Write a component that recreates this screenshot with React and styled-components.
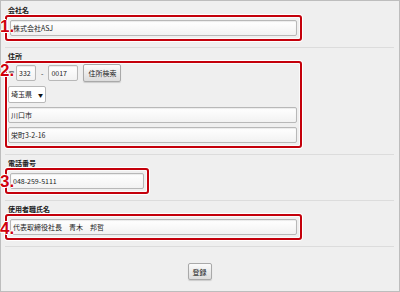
import React from 'react';
import styled, { createGlobalStyle } from 'styled-components';

const GlobalStyle = createGlobalStyle`
  html, body {
    margin: 0;
    padding: 0;
  }
  body {
    font-family: "Noto Sans CJK JP", "Noto Sans", sans-serif;
    color: #222;
  }
`;

const Page = styled.div`
  box-sizing: border-box;
  width: 400px;
  height: 292px;
  border: 1px solid #bdbdbd;
  background: #efefef;
  padding: 1px 5px 0 4px;
`;

const Section = styled.section`
  padding: 4px 0 6px;
  border-bottom: 1px solid #dcdcdc;
`;

const Label = styled.div`
  font-size: 7px;
  font-weight: bold;
  line-height: 9px;
  padding-left: 3px;
`;

const Highlight = styled.div`
  position: relative;
  box-sizing: border-box;
  width: ${(p) => p.$width}px;
  border: 2px solid #c4000b;
  border-radius: 3px;
  padding: ${(p) => p.$pad || '3px'};
  display: flex;
  flex-direction: column;
  align-items: flex-start;
  gap: 4px;
  box-shadow: 0 0 0 1px #fff, inset 0 0 0 1px rgba(255, 255, 255, 0.7);
`;

const Num = styled.span`
  position: absolute;
  left: -7px;
  top: ${(p) => p.$top}px;
  font: bold 17px/1 "Liberation Sans", Arial, sans-serif;
  color: #d0000d;
  text-shadow: -1px 0 #fff, 1px 0 #fff, 0 -1px #fff, 0 1px #fff;
`;

const Input = styled.input`
  box-sizing: border-box;
  width: ${(p) => (p.$width ? `${p.$width}px` : '100%')};
  height: 16px;
  margin: 0;
  padding: 0 2px;
  border: 1px solid #b8b8b8;
  border-radius: 2px;
  background: linear-gradient(#ffffff, #f2f2f2);
  box-shadow: inset 0 1px 1px rgba(0, 0, 0, 0.08);
  font-family: "Noto Sans CJK JP", sans-serif;
  font-size: 7px;
  color: #222;
  outline: none;
`;

const Row = styled.div`
  display: flex;
  align-items: center;
  gap: 5px;
`;

const Mark = styled.span`
  width: 3px;
  overflow: visible;
  white-space: nowrap;
  font-size: 7px;
  line-height: 9px;
`;

const Dash = styled.span`
  font-size: 7px;
  line-height: 9px;
`;

const Button = styled.button`
  box-sizing: border-box;
  height: ${(p) => p.$height || 18}px;
  padding: 0 4px;
  margin: 0;
  border: 1px solid #a9a9a9;
  border-radius: 2px;
  background: linear-gradient(#fbfbfb, #dcdcdc);
  box-shadow: 0 1px 1px rgba(0, 0, 0, 0.15);
  font-family: "Noto Sans CJK JP", sans-serif;
  font-size: 7px;
  color: #222;
`;

const SelectWrap = styled.div`
  position: relative;
  display: flex;
  width: 38px;
  height: 17px;
`;

const Select = styled.select`
  box-sizing: border-box;
  width: 38px;
  height: 17px;
  min-height: 0;
  margin: 0;
  padding: 0 2px;
  line-height: 15px;
  appearance: none;
  -webkit-appearance: none;
  border: 1px solid #b8b8b8;
  border-radius: 2px;
  background: #fff;
  font-family: "Noto Sans CJK JP", sans-serif;
  font-size: 7px;
  color: #222;
`;

const Arrow = styled.span`
  position: absolute;
  right: 3px;
  top: 5px;
  font-size: 5px;
  line-height: 7px;
  color: #111;
  pointer-events: none;
`;

const Footer = styled.div`
  padding-top: 16px;
  display: flex;
  justify-content: center;
`;

const App = () => {
  return (
    <Page>
      <GlobalStyle />
      <Section>
        <Label>会社名</Label>
        <Highlight $width={297}>
          <Num $top={1}>1.</Num>
          <Input readOnly defaultValue="株式会社ASJ" />
        </Highlight>
      </Section>
      <Section>
        <Label>住所</Label>
        <Highlight $width={297} $pad="1px 3px 3px 1px">
          <Num $top={-1}>2.</Num>
          <Row>
            <Mark>〒</Mark>
            <Input readOnly $width={20} defaultValue="332" />
            <Dash>-</Dash>
            <Input readOnly $width={30} defaultValue="0017" />
            <Button>住所検索</Button>
          </Row>
          <SelectWrap>
            <Select defaultValue="埼玉県">
              <option>埼玉県</option>
            </Select>
            <Arrow>▼</Arrow>
          </SelectWrap>
          <Input readOnly defaultValue="川口市" />
          <Input readOnly defaultValue="栄町3-2-16" />
        </Highlight>
      </Section>
      <Section>
        <Label>電話番号</Label>
        <Highlight $width={144}>
          <Num $top={3}>3.</Num>
          <Input readOnly defaultValue="048-259-5111" />
        </Highlight>
      </Section>
      <Section>
        <Label>使用者職氏名</Label>
        <Highlight $width={297}>
          <Num $top={4}>4.</Num>
          <Input readOnly defaultValue="代表取締役社長　青木　邦哲" />
        </Highlight>
      </Section>
      <Footer>
        <Button $height={17}>登録</Button>
      </Footer>
    </Page>
  );
};

export default App;
